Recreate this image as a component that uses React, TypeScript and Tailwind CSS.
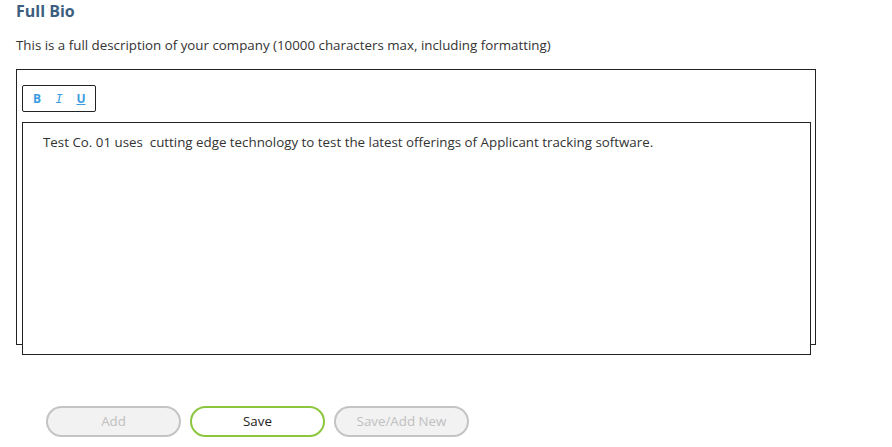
import React from 'react';

const App = () => {
  return (
    <div className="w-[892px] h-[447px] bg-white px-4 font-['Open_Sans',sans-serif] text-[#333]">
      <h2 className="text-[16px] leading-[22px] font-bold text-[#3d5f7f]">Full Bio</h2>
      <p className="mt-[14px] text-[13.33px] leading-[18px] text-[#333]">
        This is a full description of your company (10000 characters max, including formatting)
      </p>

      <div className="mt-[15px] w-[800px] h-[276px] border border-[#222] px-[5px] pt-[15px]">
        <div className="flex items-center w-[74px] h-[27px] border border-[#222] rounded-[2px] pl-[3px] pr-[3px] text-[#3b9be0]">
          <button className="w-[22px] text-center text-[12px] font-bold leading-none">B</button>
          <button className="w-[22px] text-center text-[12px] italic leading-none font-['DejaVu_Sans_Mono',monospace]">I</button>
          <button className="w-[22px] text-center text-[12px] font-bold underline leading-none">U</button>
        </div>
        <div className="mt-[10px] w-[789px] h-[233px] border border-[#222] bg-white pl-[20px] pt-[10px] text-[13.33px] leading-[18px] text-[#333] whitespace-pre-wrap">
          {'Test Co. 01 uses  cutting edge technology to test the latest offerings of Applicant tracking software.'}
        </div>
      </div>

      <div className="mt-[61px] flex gap-[9px] pl-[30px]">
        <button className="w-[135px] h-[31px] rounded-full border-2 border-[#c4c4c6] bg-[#f2f2f2] text-[13.33px] text-[#c0c0c0]">
          Add
        </button>
        <button className="w-[135px] h-[31px] rounded-full border-2 border-[#8cc63f] bg-white text-[13.33px] text-[#222]">
          Save
        </button>
        <button className="w-[135px] h-[31px] rounded-full border-2 border-[#c4c4c6] bg-[#f2f2f2] text-[13.33px] text-[#c0c0c0]">
          Save/Add New
        </button>
      </div>
    </div>
  );
};

export default App;
